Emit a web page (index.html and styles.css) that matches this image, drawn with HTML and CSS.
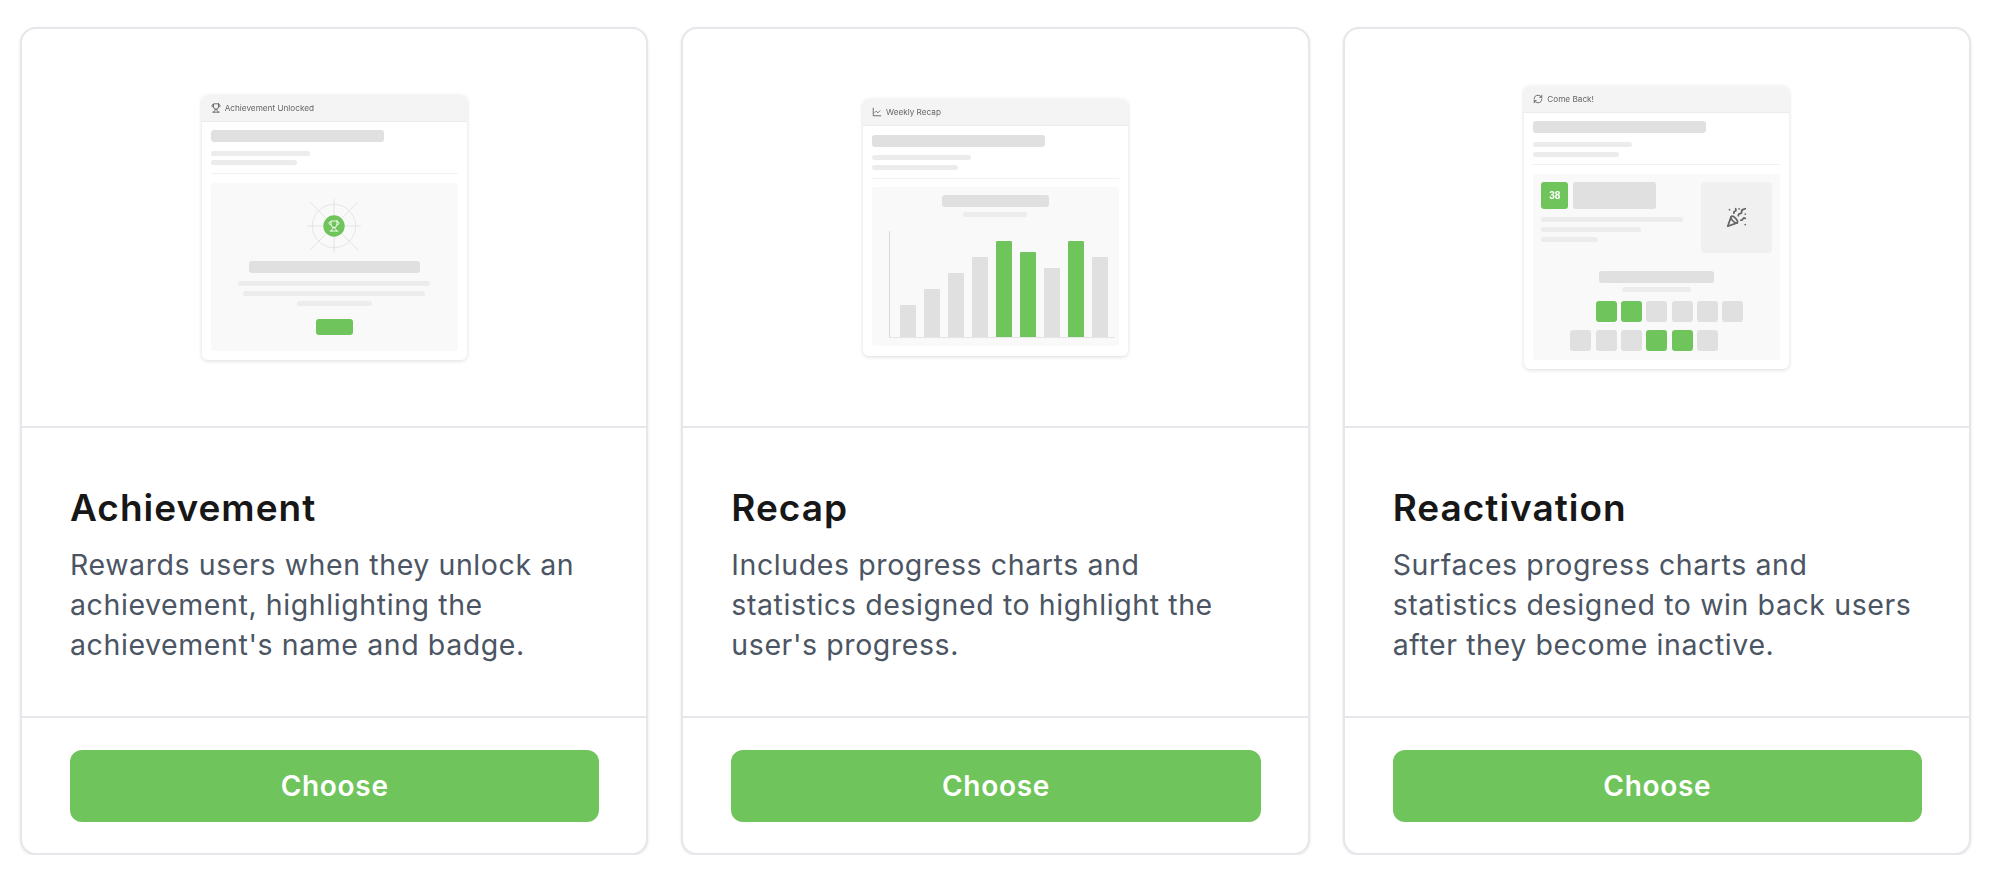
FILE: index.html
```html
<!DOCTYPE html>
<html lang="en">
<head>
<meta charset="utf-8">
<title>Choose a template</title>
<link rel="stylesheet" href="styles.css">
</head>
<body>
<main class="grid">
  <article class="card">
    <div class="preview">
      <div class="mock">
        <div class="mock-head">
          <svg class="mock-icon" viewBox="0 0 24 24"><path d="M6 9H4.5a2.5 2.5 0 0 1 0-5H6"/><path d="M18 9h1.5a2.5 2.5 0 0 0 0-5H18"/><path d="M4 22h16"/><path d="M10 14.66V17c0 .55-.47.98-.97 1.21C7.85 18.75 7 20.24 7 22"/><path d="M14 14.66V17c0 .55.47.98.97 1.21C16.15 18.75 17 20.24 17 22"/><path d="M18 2H6v7a6 6 0 0 0 12 0V2Z"/></svg>
          <span>Achievement Unlocked</span>
        </div>
        <div class="mock-body">
          <div class="pill w173"></div>
          <div class="line w99 first"></div>
          <div class="line w86"></div>
          <div class="rule"></div>
          <div class="panel panel-center p1">
            <svg class="burst" viewBox="0 0 54 54">
              <g class="rays">
                <circle cx="27" cy="27" r="21.7"/>
                <path d="M27 0v54M0 27h54M3 3l48 48M51 3L3 51"/>
              </g>
              <circle class="burst-dot" cx="27" cy="27" r="10.7"/>
              <svg x="21" y="21" width="12" height="12" viewBox="0 0 24 24" class="burst-cup"><path d="M6 9H4.5a2.5 2.5 0 0 1 0-5H6"/><path d="M18 9h1.5a2.5 2.5 0 0 0 0-5H18"/><path d="M4 22h16"/><path d="M10 14.66V17c0 .55-.47.98-.97 1.21C7.85 18.75 7 20.24 7 22"/><path d="M14 14.66V17c0 .55.47.98.97 1.21C16.15 18.75 17 20.24 17 22"/><path d="M18 2H6v7a6 6 0 0 0 12 0V2Z"/></svg>
            </svg>
            <div class="pill w171 mt8"></div>
            <div class="line w192 mt8"></div>
            <div class="line w182"></div>
            <div class="line w75"></div>
            <div class="mock-btn"></div>
          </div>
        </div>
      </div>
    </div>
    <div class="copy">
      <h2>Achievement</h2>
      <p>Rewards users when they unlock an achievement, highlighting the achievement's name and badge.</p>
    </div>
    <div class="foot"><button class="choose">Choose</button></div>
  </article>

  <article class="card">
    <div class="preview">
      <div class="mock">
        <div class="mock-head">
          <svg class="mock-icon" viewBox="0 0 24 24"><path d="M3 3v18h18"/><path d="m19 9-5 5-4-4-3 3"/></svg>
          <span>Weekly Recap</span>
        </div>
        <div class="mock-body">
          <div class="pill w173"></div>
          <div class="line w99 first"></div>
          <div class="line w86"></div>
          <div class="rule"></div>
          <div class="panel panel-center p2">
            <div class="pill w107"></div>
            <div class="line w64 sub"></div>
            <div class="chart">
              <div class="bar h32"></div>
              <div class="bar h48"></div>
              <div class="bar h64"></div>
              <div class="bar h80"></div>
              <div class="bar h96 green"></div>
              <div class="bar h85 green"></div>
              <div class="bar h69"></div>
              <div class="bar h96 green"></div>
              <div class="bar h80"></div>
            </div>
          </div>
        </div>
      </div>
    </div>
    <div class="copy">
      <h2>Recap</h2>
      <p>Includes progress charts and statistics designed to highlight the user's progress.</p>
    </div>
    <div class="foot"><button class="choose">Choose</button></div>
  </article>

  <article class="card">
    <div class="preview">
      <div class="mock">
        <div class="mock-head">
          <svg class="mock-icon" viewBox="0 0 24 24"><path d="M3 12a9 9 0 0 1 9-9 9.75 9.75 0 0 1 6.74 2.74L21 8"/><path d="M21 3v5h-5"/><path d="M21 12a9 9 0 0 1-9 9 9.75 9.75 0 0 1-6.74-2.74L3 16"/><path d="M8 16H3v5"/></svg>
          <span>Come Back!</span>
        </div>
        <div class="mock-body">
          <div class="pill w173"></div>
          <div class="line w99 first"></div>
          <div class="line w86"></div>
          <div class="rule"></div>
          <div class="panel p3">
            <div class="streak">
              <div class="streak-text">
                <div class="streak-top">
                  <div class="badge">38</div>
                  <div class="badge-pill"></div>
                </div>
                <div class="line w142 mt8"></div>
                <div class="line w100"></div>
                <div class="line w57"></div>
              </div>
              <div class="popper">
                <svg class="popper-icon" viewBox="0 0 24 24"><path d="M5.8 11.3 2 22l10.7-3.79"/><path d="M4 3h.01"/><path d="M22 8h.01"/><path d="M15 2h.01"/><path d="M22 20h.01"/><path d="m22 2-2.24.75a2.9 2.9 0 0 0-1.96 3.12c.1.86-.57 1.63-1.45 1.63h-.38c-.86 0-1.6.6-1.76 1.44L14 10"/><path d="m22 13-.82-.33c-.86-.34-1.82.2-1.98 1.11c-.11.7-.72 1.22-1.43 1.22H17"/><path d="m11 2 .33.82c.34.86-.2 1.82-1.11 1.98C9.52 4.9 9 5.52 9 6.23V7"/><path d="M11 13c1.93 1.93 2.83 4.17 2 5-.83.83-3.07-.07-5-2-1.93-1.93-2.83-4.17-2-5 .83-.83 3.07.07 5 2Z"/></svg>
              </div>
            </div>
            <div class="pill w115 center"></div>
            <div class="line w69 sub center"></div>
            <div class="days">
              <div class="day"></div>
              <div class="day green"></div>
              <div class="day green"></div>
              <div class="day"></div>
              <div class="day"></div>
              <div class="day"></div>
              <div class="day"></div>
              <div class="day"></div>
              <div class="day"></div>
              <div class="day"></div>
              <div class="day green"></div>
              <div class="day green"></div>
              <div class="day"></div>
              <div class="day blank"></div>
            </div>
          </div>
        </div>
      </div>
    </div>
    <div class="copy">
      <h2>Reactivation</h2>
      <p>Surfaces progress charts and statistics designed to win back users after they become inactive.</p>
    </div>
    <div class="foot"><button class="choose">Choose</button></div>
  </article>
</main>
</body>
</html>
```

FILE: styles.css
```css
* { box-sizing: border-box; }
html, body { margin: 0; background: #fff; }
body { font-family: Inter, "Liberation Sans", sans-serif; }

.grid {
  display: grid;
  grid-template-columns: repeat(3, 1fr);
  gap: 33px;
  padding: 27px 23px 0 20px;
}

.card {
  border: 2px solid #e5e7eb;
  border-radius: 16px;
  background: #fff;
  box-shadow: 0 1px 3px rgba(0, 0, 0, .1);
  overflow: hidden;
}

.preview {
  height: 399px;
  display: flex;
  align-items: center;
  justify-content: center;
  border-bottom: 2px solid #e5e7eb;
}

.copy { height: 290px; padding: 48px 47px 0 48px; border-bottom: 2px solid #e5e7eb; }
.copy h2 {
  margin: 0 0 4.5px;
  font-size: 37px;
  line-height: 64px;
  font-weight: 600;
  letter-spacing: 1px;
  color: #171717;
}
.copy p {
  margin: 0;
  font-size: 28.5px;
  line-height: 40px;
  letter-spacing: .59px;
  color: #4b5563;
}

.foot { padding: 32px 47px 31px 48px; }
.choose {
  display: block;
  width: 100%;
  height: 72px;
  border: 0;
  border-radius: 12px;
  background: #6fc45c;
  color: #fff;
  font: 600 28px/1 Inter, "Liberation Sans", sans-serif;
  letter-spacing: .7px;
}

/* mock template */
.mock {
  width: 265px;
  border-radius: 6px;
  background: #fff;
  box-shadow: 0 1px 4px rgba(0, 0, 0, .14);
  overflow: hidden;
  filter: blur(.35px);
}
.mock-head {
  height: 27px;
  display: flex;
  align-items: center;
  gap: 4px;
  padding-left: 9px;
  background: #f4f4f4;
  border-bottom: 1px solid #ebebeb;
  font-size: 8.2px;
  color: #666;
}
.mock-icon {
  width: 10px;
  height: 10px;
  fill: none;
  stroke: #555;
  stroke-width: 2;
  stroke-linecap: round;
  stroke-linejoin: round;
}
.mock-body { padding: 8.3px 9px 9.3px; }

.pill { height: 12px; border-radius: 3px; background: #e0e0e0; }
.line { height: 5px; margin-top: 4.7px; border-radius: 3px; background: #ececec; }
.line.first { margin-top: 8.5px; }
.rule { height: 1px; margin: 7.7px 0 8.7px; background: #f1f1f1; }

.w173 { width: 173px; }
.w171 { width: 171px; }
.w115 { width: 115px; }
.w107 { width: 107px; }
.w192 { width: 192px; }
.w182 { width: 182px; }
.w142 { width: 142px; }
.w100 { width: 100px; }
.w99 { width: 99px; }
.w86 { width: 86px; }
.w75 { width: 75px; }
.w69 { width: 69px; }
.w64 { width: 64px; }
.w57 { width: 57px; }
.mt8 { margin-top: 8.3px; }
.line.sub { margin-top: 4.5px; }
.center { margin-left: auto; margin-right: auto; }

.panel { border-radius: 3px; background: #f9f9f9; }
.panel-center { display: flex; flex-direction: column; align-items: center; }
.p1 { height: 168px; padding-top: 16px; }
.p2 { height: 159px; padding-top: 8px; }
.p3 { height: 185.5px; padding: 8px; }

.burst { width: 54px; height: 54px; display: block; }
.rays { fill: none; stroke: #e0e0e0; stroke-width: .8; }
.burst-dot { fill: #6fc45c; }
.burst-cup { fill: none; stroke: #fff; stroke-width: 1.8; stroke-linecap: round; stroke-linejoin: round; }
.mock-btn { width: 37px; height: 16px; margin-top: 13px; border-radius: 3px; background: #6fc45c; }

.chart {
  align-self: flex-start;
  display: flex;
  align-items: flex-end;
  gap: 8px;
  width: 226px;
  height: 106.5px;
  margin: 14.7px 0 0 17px;
  padding-left: 10px;
  border-left: 1px solid #d9d9d9;
  border-bottom: 1px solid #e6e6e6;
}
.bar { width: 16px; border-radius: 1px 1px 0 0; background: #e0e0e0; }
.h32 { height: 32px; }
.h48 { height: 48px; }
.h64 { height: 64px; }
.h69 { height: 69px; }
.h80 { height: 80px; }
.h85 { height: 85px; }
.h96 { height: 96px; }
.bar.green, .day.green { background: #6fc45c; }

.streak { display: flex; justify-content: space-between; height: 88.5px; }
.streak-top { display: flex; gap: 4.3px; }
.badge {
  width: 27px;
  height: 27px;
  display: flex;
  align-items: center;
  justify-content: center;
  border-radius: 3px;
  background: #6fc45c;
  color: #fff;
  font-size: 10px;
  font-weight: 700;
  font-family: "Liberation Sans", sans-serif;
}
.badge-pill { width: 83px; height: 27px; border-radius: 3px; background: #e0e0e0; }
.popper {
  width: 71px;
  height: 71px;
  display: flex;
  align-items: center;
  justify-content: center;
  border-radius: 4px;
  background: #f0f0f0;
}
.popper-icon {
  width: 21px;
  height: 21px;
  fill: none;
  stroke: #666;
  stroke-width: 2;
  stroke-linecap: round;
  stroke-linejoin: round;
}

.days {
  display: grid;
  grid-template-columns: repeat(7, 21px);
  gap: 8.6px 4.4px;
  justify-content: center;
  margin-top: 8.7px;
}
.day { height: 21px; border-radius: 3px; background: #e0e0e0; }
.day:first-child, .day.blank { background: transparent; }
```
